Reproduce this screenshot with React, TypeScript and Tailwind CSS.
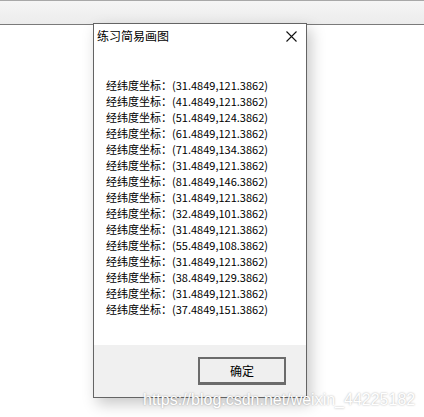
const points = [
  "(31.4849,121.3862)",
  "(41.4849,121.3862)",
  "(51.4849,124.3862)",
  "(61.4849,121.3862)",
  "(71.4849,134.3862)",
  "(31.4849,121.3862)",
  "(81.4849,146.3862)",
  "(31.4849,121.3862)",
  "(32.4849,101.3862)",
  "(31.4849,121.3862)",
  "(55.4849,108.3862)",
  "(31.4849,121.3862)",
  "(38.4849,129.3862)",
  "(31.4849,121.3862)",
  "(37.4849,151.3862)",
];

const font = "font-['Microsoft_YaHei','Noto_Sans_CJK_SC',sans-serif]";

export default function App() {
  return (
    <div className="relative w-[424px] h-[417px] bg-white overflow-hidden">
      {/* background window strip */}
      <div className="h-[25px] border-t border-[#a8a8a8] border-b border-b-[#7a7a7a] bg-gradient-to-b from-[#f5f5f5] to-[#ececec]" />

      {/* dialog */}
      <div
        className={`absolute left-[93px] top-[23px] w-[214px] h-[375px] border border-[#646464] bg-white flex flex-col shadow-[4px_6px_14px_rgba(0,0,0,0.22)] ${font}`}
      >
        <div className="h-[24px] flex items-center justify-between pl-[3px] pr-[9px]">
          <span className="text-[12px] text-black leading-none">练习简易画图</span>
          <svg width="11" height="11" viewBox="0 0 11 11">
            <path d="M0.5 0.5 L10.5 10.5 M10.5 0.5 L0.5 10.5" stroke="#111" strokeWidth="1.1" />
          </svg>
        </div>
        <div className="h-[297px] pt-[29px] pl-[12px]">
          {points.map((p, i) => (
            <div key={i} className="h-[16px] leading-[16px] text-[11px] text-black whitespace-nowrap">
              经纬度坐标：{p}
            </div>
          ))}
        </div>
        <div className="flex-1 bg-[#f0f0f0] flex justify-end items-start pt-[12px] pr-[20px]">
          <button className="w-[88px] h-[28px] border-2 border-[#6b6b6b] border-b-[3px] bg-[#efefef] text-[12px] text-black flex items-center justify-center">
            确定
          </button>
        </div>
      </div>

      {/* watermark */}
      <div className="absolute left-[143px] top-[388px] text-[16px] text-white font-['Liberation_Sans',Arial,sans-serif] whitespace-nowrap [text-shadow:0_0_2px_rgba(0,0,0,0.35)]">
        https://blog.csdn.net/weixin_44225182
      </div>
    </div>
  );
}
